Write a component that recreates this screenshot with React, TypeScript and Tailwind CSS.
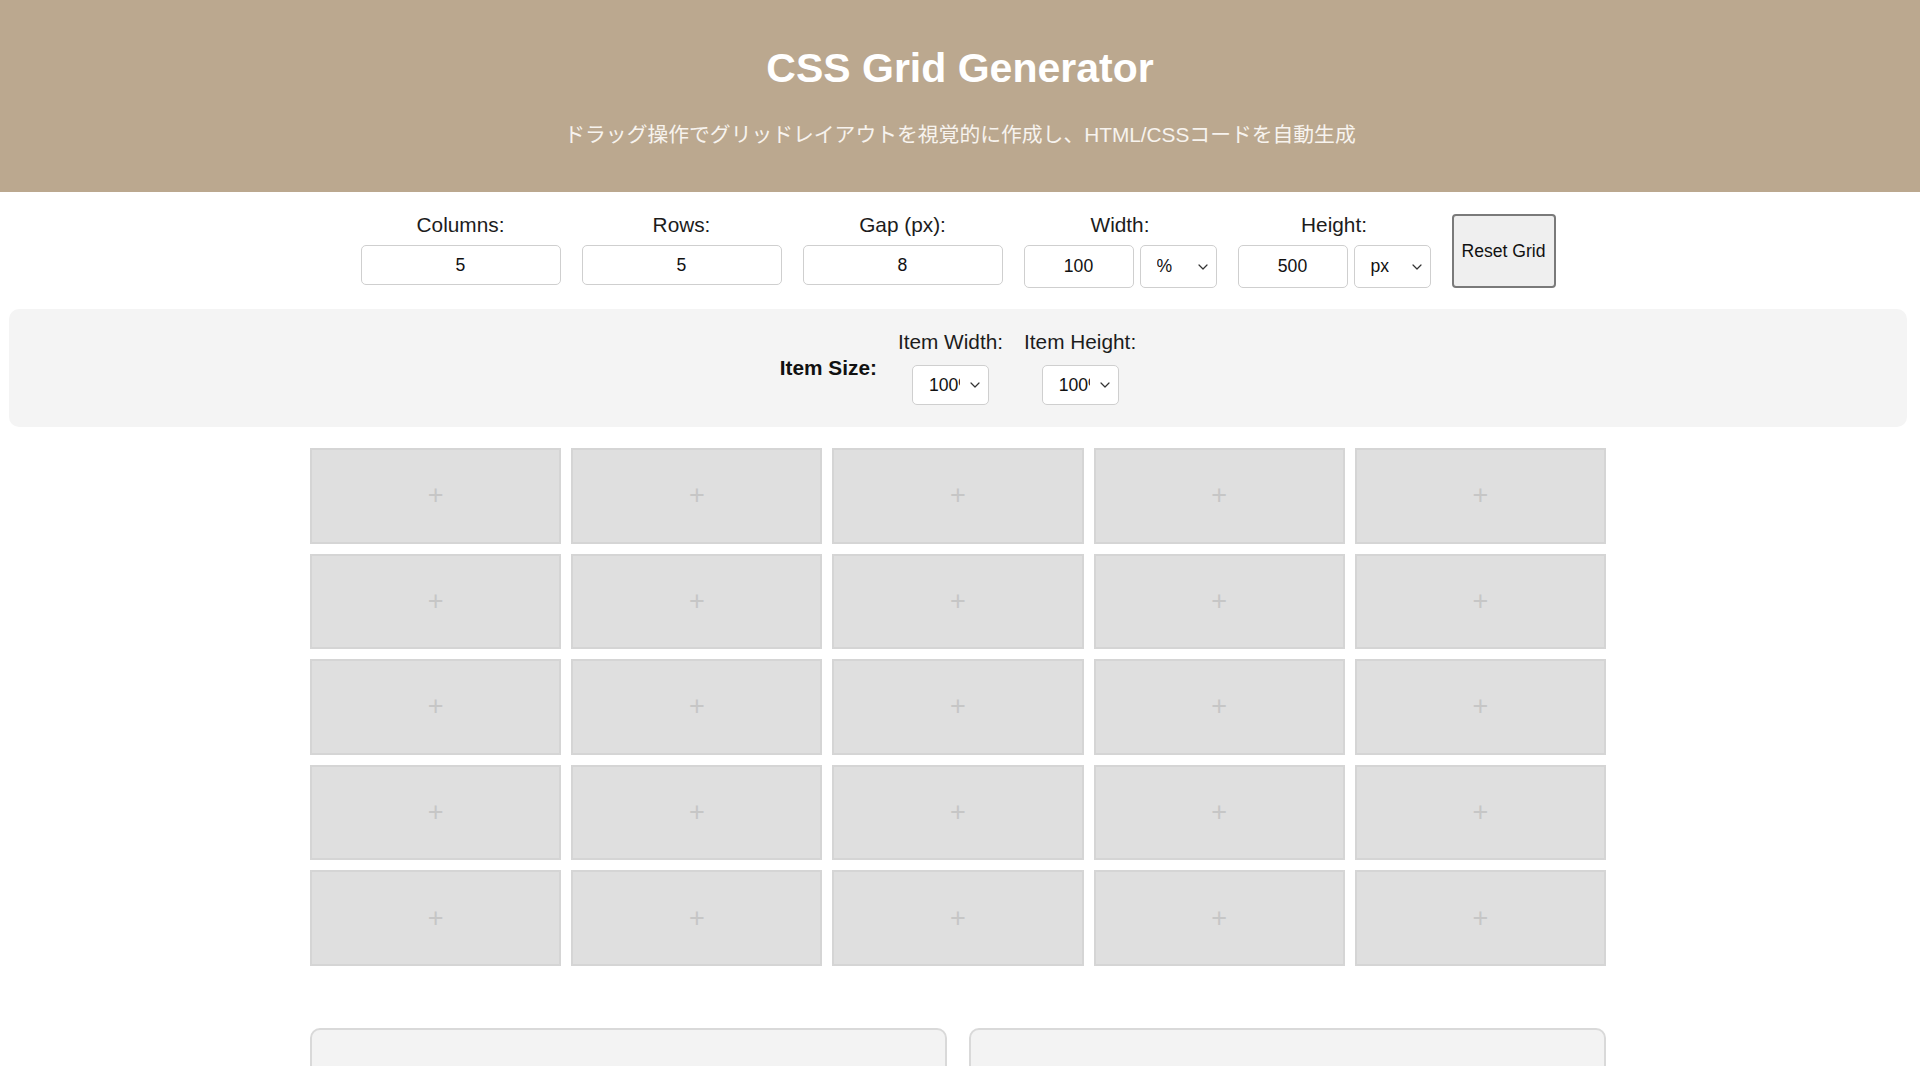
const FONT = "font-['Liberation_Sans',Arial,'Noto_Sans_CJK_JP',sans-serif]";

const ROWS = 5;
const COLS = 5;

function Chevron() {
  return (
    <svg
      className="pointer-events-none absolute right-[8px] top-1/2 -translate-y-1/2"
      width="10"
      height="6"
      viewBox="0 0 10 6"
      fill="none"
    >
      <path d="M1 1l4 4 4-4" stroke="#333" strokeWidth="1.2" strokeLinecap="round" strokeLinejoin="round" />
    </svg>
  );
}

function FakeSelect({ value, className }: { value: string; className: string }) {
  return (
    <div
      className={`relative flex items-center rounded-[5px] border border-[#cfcfcf] bg-white pl-[16px] pr-[28px] text-[17.6px] text-[#111] ${className}`}
    >
      <span className="block overflow-hidden whitespace-nowrap">{value}</span>
      <Chevron />
    </div>
  );
}

function NumberField({ label, value }: { label: string; value: string }) {
  return (
    <div className="flex flex-col items-center">
      <label className="mb-[8px] text-[20.8px] leading-[24px] text-[#1c1c1c]">{label}</label>
      <input
        readOnly
        value={value}
        className="h-[40px] w-[200px] rounded-[5px] border border-[#cfcfcf] bg-white text-center text-[17.6px] text-[#111] outline-none"
      />
    </div>
  );
}

function SizeField({ label, value, unit }: { label: string; value: string; unit: string }) {
  return (
    <div className="flex flex-col items-center">
      <label className="mb-[8px] text-[20.8px] leading-[24px] text-[#1c1c1c]">{label}</label>
      <div className="flex gap-[6px]">
        <input
          readOnly
          value={value}
          className="h-[43px] w-[110px] rounded-[5px] border border-[#cfcfcf] bg-white text-center text-[17.6px] text-[#111] outline-none"
        />
        <FakeSelect value={unit} className="h-[43px] w-[77px]" />
      </div>
    </div>
  );
}

function Cell() {
  return (
    <div className="flex items-center justify-center border-2 border-[#d5d5d5] bg-[#dfdfdf] text-[27px] font-light leading-none text-[#c6c6c6]">
      +
    </div>
  );
}

export default function App() {
  return (
    <div className={`min-h-screen bg-white ${FONT}`}>
      <header className="flex h-[192px] flex-col items-center bg-[#bba88f] pt-[45px] text-center">
        <h1 className="text-[41px] font-bold leading-[46px] text-white">CSS Grid Generator</h1>
        <p className="mt-[32px] text-[20.8px] leading-[24px] text-[#f7f3ee]">
          ドラッグ操作でグリッドレイアウトを視覚的に作成し、HTML/CSSコードを自動生成
        </p>
      </header>

      <div className="pr-[4px]">
        <section className="flex justify-center gap-[21px] pt-[21px]">
          <NumberField label="Columns:" value="5" />
          <NumberField label="Rows:" value="5" />
          <NumberField label="Gap (px):" value="8" />
          <SizeField label="Width:" value="100" unit="%" />
          <SizeField label="Height:" value="500" unit="px" />
          <button className="mt-px w-[104px] rounded-[4px] border-2 border-[#7a7a7a] bg-[#efefef] text-[17.6px] text-[#111]">
            Reset Grid
          </button>
        </section>
      </div>

      <section className="ml-[9px] mr-[13px] mt-[21px] flex items-center justify-center gap-[21px] rounded-[10px] bg-[#f4f4f4] pb-[22px] pt-[21px]">
        <span className="text-[20.8px] font-bold text-[#111]">Item Size:</span>
        <div className="flex flex-col items-center">
          <label className="mb-[11px] text-[20.8px] leading-[24px] text-[#1c1c1c]">Item Width:</label>
          <FakeSelect value="100%" className="h-[40px] w-[77px]" />
        </div>
        <div className="flex flex-col items-center">
          <label className="mb-[11px] text-[20.8px] leading-[24px] text-[#1c1c1c]">Item Height:</label>
          <FakeSelect value="100%" className="h-[40px] w-[77px]" />
        </div>
      </section>

      <div className="pr-[4px]">
        <main className="mx-auto mt-[21px] w-[1296px]">
          <div className="grid h-[518px] grid-cols-5 grid-rows-5 gap-[10px]">
            {Array.from({ length: ROWS * COLS }).map((_, i) => (
              <Cell key={i} />
            ))}
          </div>

          <div className="mt-[62px] grid grid-cols-2 gap-[22px] pb-10">
            <div className="h-[320px] rounded-[10px] border-2 border-[#d9d9d9] bg-[#f3f3f3]" />
            <div className="h-[320px] rounded-[10px] border-2 border-[#d9d9d9] bg-[#f3f3f3]" />
          </div>
        </main>
      </div>
    </div>
  );
}
